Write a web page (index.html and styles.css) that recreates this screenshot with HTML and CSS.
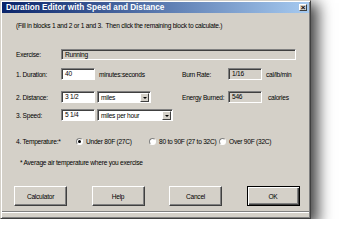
FILE: index.html
```html
<!DOCTYPE html>
<html lang="en">
<head>
    <meta charset="UTF-8">
    <title>Duration Editor with Speed and Distance</title>
    <link rel="stylesheet" href="styles.css">
</head>
<body>
    <div class="dialog">
        <div class="titlebar">
            <span class="title">Duration Editor with Speed and Distance</span>
            <span class="close">&times;</span>
        </div>

        <div class="content">
            <p class="note">(Fill in blocks 1 and 2 or 1 and 3.&nbsp; Then click the remaining block to calculate.)</p>

            <div class="row exercise-row">
                <span class="lbl">Exercise:</span>
                <div class="field ro exercise">Running</div>
            </div>

            <div class="row row-1">
                <div class="left">
                    <span class="lbl">1. Duration:</span>
                    <div class="field num">40</div>
                    <span class="unit">minutes:seconds</span>
                </div>
                <div class="right">
                    <span class="rlbl">Burn Rate:</span>
                    <div class="field ro num">1/16</div>
                    <span class="unit">cal/lb/min</span>
                </div>
            </div>

            <div class="row row-2">
                <div class="left">
                    <span class="lbl">2. Distance:</span>
                    <div class="field num">3 1/2</div>
                    <div class="select short"><span class="sel-text">miles</span><span class="arrow"></span></div>
                </div>
                <div class="right">
                    <span class="rlbl">Energy Burned:</span>
                    <div class="field ro num">546</div>
                    <span class="unit wide-gap">calories</span>
                </div>
            </div>

            <div class="row row-3">
                <div class="left">
                    <span class="lbl">3. Speed:</span>
                    <div class="field num">5 1/4</div>
                    <div class="select long"><span class="sel-text">miles per hour</span><span class="arrow"></span></div>
                </div>
            </div>

            <div class="row temp-row">
                <span class="tlbl">4. Temperature:*</span>
                <label class="opt opt-1"><span class="radio checked"></span>Under 80F (27C)</label>
                <label class="opt opt-2"><span class="radio"></span>80 to 90F (27 to 32C)</label>
                <label class="opt"><span class="radio"></span>Over 90F (32C)</label>
            </div>

            <p class="footnote">* Average air temperature where you exercise</p>
        </div>

        <div class="buttons">
            <button class="btn">Calculator</button>
            <button class="btn">Help</button>
            <button class="btn">Cancel</button>
            <button class="btn default">OK</button>
        </div>
        <div class="groove"></div>
    </div>
</body>
</html>
```

FILE: styles.css
```css
body {
    margin: 0;
    background: #fff;
    font-family: "Liberation Sans", Arial, sans-serif;
    font-size: 6.6px;
    letter-spacing: -0.25px;
    color: #000;
}
.dialog {
    width: 311px;
    height: 219px;
    box-sizing: border-box;
    background: #d4d0c8;
    border: 1px solid;
    border-color: #d4d0c8 #404040 #404040 #d4d0c8;
    box-shadow: inset 1px 1px #fff, inset -1px -1px #808080, 5px 5px 14px 2px rgba(0,0,0,0.75);
    display: flex;
    flex-direction: column;
    white-space: nowrap;
}
.titlebar {
    height: 11px;
    margin: 1px 1px 0;
    padding: 0 2px 0 4px;
    display: flex;
    align-items: center;
    background: linear-gradient(to right, #0a246a, #a6caf0);
}
.title {
    color: #fff;
    font-weight: bold;
    font-size: 8.2px;
    letter-spacing: 0;
}
.close {
    margin-left: auto;
    width: 8px;
    height: 7px;
    box-sizing: border-box;
    background: #d4d0c8;
    border: 1px solid;
    border-color: #fff #404040 #404040 #fff;
    font-size: 8px;
    font-weight: bold;
    letter-spacing: 0;
    line-height: 5px;
    text-align: center;
}
.content {
    padding: 0 13px 0 15px;
}
.note {
    margin: 8px 0 0;
    line-height: 10px;
}
.row {
    display: flex;
    align-items: center;
}
.exercise-row {
    margin-top: 18px;
}
.row-1 {
    margin-top: 8px;
}
.row-2 {
    margin-top: 11px;
}
.row-3 {
    margin-top: 6px;
}
.left {
    width: 166px;
    display: flex;
    align-items: center;
}
.right {
    display: flex;
    align-items: center;
}
.lbl {
    width: 45px;
    flex: none;
}
.rlbl {
    width: 46px;
    flex: none;
}
.field {
    height: 12px;
    box-sizing: border-box;
    border: 1px solid;
    border-color: #808080 #fff #fff #808080;
    box-shadow: inset 1px 1px #404040;
    background: #fff;
    padding-left: 3px;
    line-height: 10px;
}
.field.ro {
    background: #d4d0c8;
}
.field.exercise {
    width: 235px;
    height: 11px;
    line-height: 9px;
}
.field.num {
    width: 34px;
}
.unit {
    margin-left: 4px;
}
.unit.wide-gap {
    margin-left: 6px;
}
.select {
    margin-left: 2px;
    height: 12px;
    box-sizing: border-box;
    border: 1px solid;
    border-color: #808080 #fff #fff #808080;
    box-shadow: inset 1px 1px #404040;
    background: #fff;
    display: flex;
    align-items: stretch;
    padding: 1px 1px 0 1px;
}
.select.short {
    width: 54px;
}
.select.long {
    width: 76px;
}
.sel-text {
    flex: 1;
    padding-left: 2px;
    line-height: 9px;
}
.arrow {
    width: 9px;
    box-sizing: border-box;
    background: #d4d0c8;
    border: 1px solid;
    border-color: #fff #404040 #404040 #fff;
    display: flex;
    align-items: center;
    justify-content: center;
}
.arrow::after {
    content: "";
    border-left: 2px solid transparent;
    border-right: 2px solid transparent;
    border-top: 2px solid #000;
}
.temp-row {
    margin-top: 17px;
}
.tlbl {
    width: 60px;
    flex: none;
}
.opt {
    display: flex;
    align-items: center;
    gap: 3px;
}
.opt-1 {
    width: 73px;
}
.opt-2 {
    width: 70px;
}
.radio {
    width: 7px;
    height: 7px;
    box-sizing: border-box;
    border-radius: 50%;
    border: 1px solid;
    border-color: #808080 #fff #fff #808080;
    background: #fff;
    display: flex;
    align-items: center;
    justify-content: center;
}
.radio.checked::after {
    content: "";
    width: 3px;
    height: 3px;
    border-radius: 50%;
    background: #000;
}
.footnote {
    margin: 13px 0 0 4px;
    line-height: 10px;
}
.buttons {
    margin-top: auto;
    padding-left: 13px;
    display: flex;
    gap: 24.5px;
}
.btn {
    width: 53px;
    height: 20px;
    padding: 0;
    box-sizing: border-box;
    background: #d4d0c8;
    border: 1px solid;
    border-color: #fff #404040 #404040 #fff;
    box-shadow: inset -1px -1px #808080;
    font-family: inherit;
    font-size: 6.6px;
    letter-spacing: -0.25px;
    color: #000;
}
.btn.default {
    border-color: #000;
    box-shadow: inset 1px 1px #fff, inset -1px -1px #404040, inset -2px -2px #808080;
}
.groove {
    margin: 5px 1px 5px;
    border-top: 1px solid #808080;
    border-bottom: 1px solid #fff;
}
```
